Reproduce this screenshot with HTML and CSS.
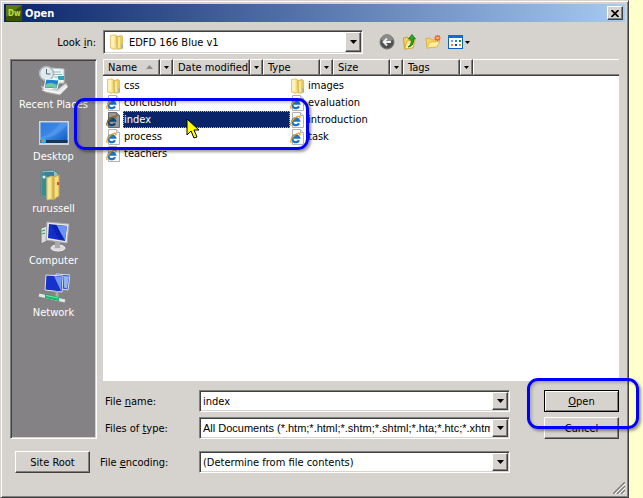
FILE: index.html
```html
<!DOCTYPE html>
<html lang="en">
<head>
  <meta charset="UTF-8">
  <meta name="viewport" content="width=device-width, initial-scale=1">
  <title>Open</title>
  <link rel="stylesheet" href="styles.css">
</head>
<body>

<!-- Shared icons -->
<svg class="sprite" aria-hidden="true">
  <symbol id="folder" viewBox="0 0 16 16">
    <path d="M1.500 1.500L6 .8l2 1.200v12.500l-2.500 1-4-1.500z" fill="#f3dc80" stroke="#d8b95c" stroke-width=".7"/>
    <path d="M7.500 2.500l5-1 1 1v12l-5 .8z" fill="#e9cb62" stroke="#cfae4a" stroke-width=".7"/>
    <path d="M2 2l3.500-.5v12.500L2 13z" fill="#fdf2b8"/>
    <path d="M9 3.500l2-.4V14l-2 .3z" fill="#f9e795"/>
    <path d="M12.500 10l1.500.5v3.500l-1.500.5z" fill="#86b4c4"/>
  </symbol>
  <symbol id="html" viewBox="0 0 16 16">
    <path d="M2.500.5h8l3 3v12h-11z" fill="#fff" stroke="#b2b2b2"/>
    <path d="M10.500.5v3h3" fill="#eee" stroke="#b5b5b5"/>
    <path d="M9 11.200A3.500 3.500 0 1 1 9.200 8.700H3.500" fill="none" stroke="#1a74c8" stroke-width="2.200"/>
    <path d="M1.500 13.800C-1 12 3.500 5 9.200 4.200c1.300 0 1 1.200.2 2" fill="none" stroke="#f0a51c" stroke-width="1.300"/>
  </symbol>
  <symbol id="arrow" viewBox="0 0 7 4">
    <path d="M0 0h7L3.500 4z" fill="#000"/>
  </symbol>
</svg>

<div class="dialog">

  <div class="titlebar">
    <svg class="logo" viewBox="0 0 16 16">
      <rect width="16" height="16" fill="#3d5200"/>
      <path d="M0 0h16L0 12z" fill="#5d7a08"/>
      <text x="2" y="11" class="logo-text">Dw</text>
    </svg>
    <h1>Open</h1>
    <button class="close" type="button" aria-label="Close">
      <svg viewBox="0 0 8 7" width="8" height="7"><path d="M.5 0l7 7M7.500 0l-7 7" stroke="#000" stroke-width="1.700"/></svg>
    </button>
  </div>

  <div class="look-row">
    <label for="lookin">Look <u>i</u>n:</label>
    <div class="combo look-combo">
      <svg class="icon"><use href="#folder"/></svg>
      <select id="lookin"><option>EDFD 166 Blue v1</option></select>
      <span class="drop"><svg><use href="#arrow"/></svg></span>
    </div>
    <div class="tools">
      <button type="button" aria-label="Back">
        <svg viewBox="0 0 16 16" width="16" height="16">
          <circle cx="8" cy="8" r="7" fill="#505050" stroke="#777"/>
          <path d="M2 6a6 6 0 0 1 12 0q-6 3-12 0z" fill="#8a8a8a"/>
          <path d="M12 8H5M8 4.500L4.500 8 8 11.500" fill="none" stroke="#eee" stroke-width="1.800"/>
        </svg>
      </button>
      <button type="button" aria-label="Up one level">
        <svg viewBox="0 0 16 16" width="16" height="16">
          <path d="M1.500 4l4-1 1 2 5-.5v9l-9 1.500z" fill="#f4d35e" stroke="#c69c2c"/>
          <path d="M2.500 15l2.500-8 8-1-2 8z" fill="#fceb9a" stroke="#d2ae42"/>
          <path d="M6 13q4-2 3-8H6.500L10 .5 13.500 5h-2q.8 7-5.500 8z" fill="#28ac28" stroke="#087508" stroke-width=".8"/>
        </svg>
      </button>
      <button type="button" aria-label="New folder">
        <svg viewBox="0 0 16 16" width="16" height="16">
          <path d="M1 4.500l4-.5 1.500 2 6-.5v7L2 14z" fill="#f7d765" stroke="#dcae45"/>
          <path d="M1.500 14L5 8l10-.5-3 5.500z" fill="#fdee9f" stroke="#e0b950"/>
          <path d="M12.500 1v6M9.500 4h6M10.300 1.800l4.400 4.400M14.700 1.800l-4.400 4.400" stroke="#f0582a" stroke-width="1.400"/>
          <circle cx="12.500" cy="4" r="1.300" fill="#ffcb70"/>
        </svg>
      </button>
      <button type="button" class="views" aria-label="Views">
        <svg viewBox="0 0 23 14" width="23" height="14">
          <rect x=".5" y=".5" width="14" height="13" fill="#fff" stroke="#0b62c4"/>
          <path d="M0 0h15v3H0z" fill="#0b6ed8"/>
          <path d="M3 5h2v2H3z" fill="#9a8fd8"/><path d="M7 5h2v2H7z" fill="#2a88d8"/><path d="M11 5h2v2h-2z" fill="#109010"/>
          <path d="M3 9h2v2H3z" fill="#f47850"/><path d="M7 9h2v2H7z" fill="#1040a8"/><path d="M11 9h2v2h-2z" fill="#d0a010"/>
          <path d="M17 6h5l-2.500 3z" fill="#000"/>
        </svg>
      </button>
    </div>
  </div>

  <div class="workspace">

    <nav class="places">
      <button type="button">
        <svg viewBox="0 0 32 32">
          <path d="M13 3l13 1v14H12z" fill="#f2f5f3" stroke="#b9c3c3"/>
          <path d="M16 7h7M16 9.500h8M16 12h4" stroke="#9bb4bc"/>
          <path d="M20 11h6v4h-6z" fill="#379bc6"/>
          <circle cx="8.500" cy="8.500" r="7" fill="#dfeaec" stroke="#a6b5b9" stroke-width="1.500"/>
          <path d="M8.500 4v5h4" fill="none" stroke="#526d78"/>
          <path d="M3 21l4 6 15 3 8-8-2-4-9 7z" fill="#e4e4df" stroke="#aaa"/>
          <path d="M8 14l13 1-2 9-13-1z" fill="#1b83cb" stroke="#f8ffff"/>
          <path d="M7 20q5-4 12 0l-.5 3-11-1z" fill="#73c8a0"/>
          <path d="M4 25l17 3 8-7" fill="none" stroke="#fff"/>
        </svg>
        Recent Places
      </button>
      <button type="button">
        <svg viewBox="0 0 32 32">
          <defs>
            <linearGradient id="desk" x2="1" y2="1"><stop stop-color="#2c7bdc"/><stop offset=".5" stop-color="#3f88e6"/><stop offset="1" stop-color="#0d55bd"/></linearGradient>
          </defs>
          <path d="M1 4h30v24H1z" fill="#cfd6dc"/>
          <path d="M2.500 5.500h27v20h-27z" fill="url(#desk)"/>
          <path d="M3 20Q14 18 22 6h7v2Q20 20 3 22z" fill="#67acf2" opacity=".4"/>
          <path d="M2.500 23h27v3h-27z" fill="#17345c"/>
          <circle cx="5.500" cy="24" r="2.500" fill="#2bb8e5"/><path d="M4 23h1.500v1.500H4z" fill="#f56a36"/>
        </svg>
        Desktop
      </button>
      <button type="button">
        <svg viewBox="0 0 32 32">
          <path d="M3 2l12-1 5 3v24l-9 3-8-5z" fill="#8fc5bd" stroke="#4f8584"/>
          <path d="M3.500 2.500l5 2v24l-5-3z" fill="#3d8b91"/>
          <path d="M6 3h10v4l-7 1z" fill="#3f7ea0"/>
          <circle cx="6" cy="8" r="1.500" fill="#dceff0"/>
          <path d="M9 9l5-2v23l-5 1z" fill="#f8e790" stroke="#d7b95a"/>
          <path d="M14 8l4-1v23l-4 1z" fill="#ddb954"/>
          <path d="M16 8l5-2v21l-5 3z" fill="#f5de7c" stroke="#c9a74b"/>
          <path d="M20 13v3" stroke="#df4141" stroke-width="2"/>
        </svg>
        rurussell
      </button>
      <button type="button">
        <svg viewBox="0 0 32 32">
          <path d="M3 7l6-2v15l-6 3z" fill="#dcdcdc" stroke="#777"/>
          <path d="M4 10l3-1M4 13l3-1" stroke="#23a34a"/>
          <ellipse cx="20" cy="27" rx="7" ry="3" fill="#d9d9d9" stroke="#f4f4f4"/>
          <path d="M17 20h5v7h-5z" fill="#aaa"/>
          <path d="M9 1l22 2-2 19-21-3z" fill="#e8e8e8" stroke="#a9a9a9"/>
          <path d="M11 3l18 2-2 15-17-3z" fill="#1230c9"/>
          <path d="M18 4l11 1-2 14z" fill="#6f94f0"/>
          <path d="M14 4l5 .5 6 14-5-1z" fill="#0d22b0"/>
        </svg>
        Computer
      </button>
      <button type="button">
        <svg viewBox="0 0 32 32">
          <path d="M18 1l14 1-2 15-13-2z" fill="#2b51da" stroke="#dedede"/>
          <path d="M26 3l5 .5-2 12-3-1z" fill="#91b5f2"/>
          <path d="M8 2l17 1-1 16-17-2z" fill="#1731cd" stroke="#e2e2e2"/>
          <path d="M16 3l8 1-1 14z" fill="#7298ef"/>
          <path d="M19 18v6" stroke="#aaa" stroke-width="3"/>
          <path d="M1 22l26 6" stroke="#dfe7e5" stroke-width="3"/>
          <path d="M7 21l14 3v4L7 25z" fill="#18b86c"/>
          <path d="M8 22.500l12 2.500" stroke="#68efa7"/>
        </svg>
        Network
      </button>
    </nav>

    <div class="content">
      <div class="files">
        <div class="columns">
          <button type="button" class="col">Name <svg class="sort" viewBox="0 0 7 4"><path d="M3.500 0L7 4H0z" fill="#8a8a8a"/></svg></button>
          <button type="button" class="filter" aria-label="Filter by name"><svg><use href="#arrow"/></svg></button>
          <button type="button" class="col wide">Date modified</button>
          <button type="button" class="filter" aria-label="Filter by date"><svg><use href="#arrow"/></svg></button>
          <button type="button" class="col">Type</button>
          <button type="button" class="filter" aria-label="Filter by type"><svg><use href="#arrow"/></svg></button>
          <button type="button" class="col">Size</button>
          <button type="button" class="filter" aria-label="Filter by size"><svg><use href="#arrow"/></svg></button>
          <button type="button" class="col">Tags</button>
          <button type="button" class="filter" aria-label="Filter by tags"><svg><use href="#arrow"/></svg></button>
          <span class="rest"></span>
        </div>
        <ul class="list">
          <li><button type="button"><svg class="icon"><use href="#folder"/></svg><span>css</span></button></li>
          <li><button type="button"><svg class="icon"><use href="#folder"/></svg><span>images</span></button></li>
          <li><button type="button"><svg class="icon"><use href="#html"/></svg><span>conclusion</span></button></li>
          <li><button type="button"><svg class="icon"><use href="#html"/></svg><span>evaluation</span></button></li>
          <li class="selected"><button type="button"><svg class="icon"><use href="#html"/></svg><span>index</span></button></li>
          <li><button type="button"><svg class="icon"><use href="#html"/></svg><span>introduction</span></button></li>
          <li><button type="button"><svg class="icon"><use href="#html"/></svg><span>process</span></button></li>
          <li><button type="button"><svg class="icon"><use href="#html"/></svg><span>task</span></button></li>
          <li><button type="button"><svg class="icon"><use href="#html"/></svg><span>teachers</span></button></li>
        </ul>
        <div class="ring ring-file"></div>
        <svg class="cursor" viewBox="0 0 13 21"><path d="M1 1v16l4-4 3 7 3-1-3-7h5z" fill="#ff0" stroke="#000"/></svg>
      </div>

      <div class="fields">
        <label for="filename">File <u>n</u>ame:</label>
        <div class="combo">
          <input id="filename" type="text" value="index">
          <span class="drop"><svg><use href="#arrow"/></svg></span>
        </div>
        <div class="open-wrap">
          <button type="button" class="btn default"><u>O</u>pen</button>
          <div class="ring ring-open"></div>
        </div>

        <label for="filetype">Files of <u>t</u>ype:</label>
        <div class="combo">
          <select id="filetype" class="sans"><option>All Documents (*.htm;*.html;*.shtm;*.shtml;*.hta;*.htc;*.xhtml;*.stm;*.ssi;*.js)</option></select>
          <span class="drop"><svg><use href="#arrow"/></svg></span>
        </div>
        <button type="button" class="btn">Cancel</button>
      </div>
    </div>
  </div>

  <div class="bottom">
    <button type="button" class="btn">Site Root</button>
    <label for="encoding">File <u>e</u>ncoding:</label>
    <div class="combo">
      <select id="encoding"><option>(Determine from file contents)</option></select>
      <span class="drop"><svg><use href="#arrow"/></svg></span>
    </div>
  </div>
  <svg class="grip" viewBox="0 0 12 12"><path d="M0 12L12 0M4 12l8-8M8 12l4-4" stroke="#808080" stroke-width="1.500"/><path d="M2 12L12 2M6 12l6-6M10 12l2-2" stroke="#fff"/></svg>

</div>

</body>
</html>
```
FILE: styles.css
```css
* {
  box-sizing: border-box;
}
body {
  margin: 0;
  padding-right: 14px;
  background: #ffffcc;
  color: #000;
  font-family: "DejaVu Sans Condensed", "DejaVu Sans", sans-serif;
  font-size: 11px;
}
button, input, select {
  font: inherit;
  color: inherit;
  margin: 0;
}
button {
  padding: 0;
  border: none;
  background: none;
}
svg {
  display: block;
  flex: none;
}
.sprite {
  position: absolute;
  width: 0;
  height: 0;
}
.icon {
  width: 16px;
  height: 16px;
}
.dialog {
  background: #d6d3ce;
  border: 1px solid #d6d3ce;
  border-right-color: #404040;
  border-bottom-color: #404040;
  box-shadow: inset 1px 1px #fff, inset -1px -1px #808080;
  padding: 3px;
}

/* title bar */
.titlebar {
  display: flex;
  align-items: center;
  gap: 3px;
  height: 18px;
  padding: 0 2px;
  background: linear-gradient(to right, #0a246a, #a6caf0);
}
.titlebar h1 {
  flex: 1;
  margin: 0;
  color: #fff;
  font-size: 11px;
}
.logo {
  width: 16px;
  height: 16px;
}
.logo-text {
  font-size: 8px;
  font-weight: bold;
  fill: #c3e03a;
}
.close {
  display: grid;
  place-items: center;
  width: 16px;
  height: 14px;
  background: #d6d3ce;
  border: 1px solid;
  border-color: #fff #404040 #404040 #fff;
  box-shadow: inset -1px -1px #808080;
}

/* look in row */
.look-row {
  display: grid;
  grid-template-columns: 92px 260px 1fr;
  align-items: center;
  column-gap: 7px;
  padding: 8px 0 5px;
}
.look-row label {
  text-align: right;
}
.tools {
  display: flex;
  align-items: center;
  gap: 7px;
  padding-left: 9px;
}

/* combo boxes */
.combo {
  display: flex;
  height: 22px;
  min-width: 0;
  background: #fff;
  border: 1px solid;
  border-color: #808080 #fff #fff #808080;
  box-shadow: inset 1px 1px #404040, inset -1px -1px #d6d3ce;
  padding: 1px;
}
.combo select,
.combo input {
  flex: 1;
  min-width: 0;
  appearance: none;
  padding: 0 2px;
  border: none;
  border-radius: 0;
  outline: none;
  background: transparent;
}
.look-combo {
  height: 24px;
  align-items: center;
  padding-left: 5px;
}
.look-combo select {
  padding-left: 4px;
}
.drop {
  display: grid;
  place-items: center;
  align-self: stretch;
  width: 16px;
  background: #d6d3ce;
  border: 1px solid;
  border-color: #fff #404040 #404040 #fff;
  box-shadow: inset -1px -1px #808080;
  pointer-events: none;
}
.drop svg {
  width: 7px;
  height: 4px;
}
.sans {
  font-family: "Liberation Sans", Arial, sans-serif;
}

/* places bar */
.workspace {
  display: grid;
  grid-template-columns: 87px 1fr;
  column-gap: 6px;
  padding: 0 6px;
}
.places {
  display: flex;
  flex-direction: column;
  gap: 6px;
  padding: 5px 1px;
  background: #848284;
  border: 1px solid;
  border-color: #808080 #fff #fff #808080;
  box-shadow: inset 1px 1px #404040, inset -1px -1px #d6d3ce;
}
.places button {
  display: flex;
  flex-direction: column;
  align-items: center;
  height: 46px;
  color: #fff;
  white-space: nowrap;
  line-height: 15px;
}
.places svg {
  width: 32px;
  height: 32px;
}

/* file list */
.files {
  position: relative;
  background: #fff;
}
.columns {
  display: flex;
  height: 17px;
  background: #d6d3ce;
  border-bottom: 1px solid #404040;
}
.col, .filter, .rest {
  border-top: 1px solid #fff;
  border-left: 1px solid #fff;
  border-bottom: 1px solid #808080;
}
.col, .filter {
  border-right: 1px solid #404040;
  box-shadow: inset -1px 0 #808080;
}
.col {
  display: flex;
  align-items: center;
  gap: 9px;
  width: 57px;
  padding-left: 4px;
  white-space: nowrap;
}
.col.wide {
  width: 77px;
}
.sort {
  width: 7px;
  height: 4px;
}
.filter {
  display: grid;
  place-items: center;
  width: 13px;
}
.filter svg {
  width: 5px;
  height: 3px;
}
.rest {
  flex: 1;
}
.list {
  display: grid;
  grid-template-columns: 184px 184px;
  grid-auto-rows: 17px;
  align-content: start;
  min-height: 305px;
  margin: 0;
  padding: 1px 3px 0;
  list-style: none;
}
.list button {
  display: flex;
  align-items: center;
  gap: 1px;
  width: 100%;
  height: 17px;
}
.list span {
  padding: 0 1px;
  line-height: 17px;
}
.selected span {
  flex: 1;
  text-align: left;
  background: #0a246a;
  color: #fff;
  outline: 1px dotted #c9a86a;
  outline-offset: -1px;
}
.selected .icon {
  filter: brightness(0.6);
}
.ring {
  position: absolute;
  border: 3px solid #0000ff;
  border-radius: 11px;
  box-shadow: 2px 2px 3px rgba(0,0,0,0.4), inset 2px 2px 3px rgba(0,0,0,0.2);
  pointer-events: none;
}
.ring-file {
  left: -29px;
  top: 39px;
  width: 235px;
  height: 52px;
}
.cursor {
  position: absolute;
  left: 83px;
  top: 59px;
  width: 13px;
  height: 21px;
}

/* fields */
.fields {
  display: grid;
  grid-template-columns: 94px 1fr 75px;
  align-items: center;
  row-gap: 5px;
  padding: 9px 0 0 2px;
}
.fields .combo {
  margin-right: 34px;
}
.btn {
  width: 75px;
  height: 22px;
  background: #d6d3ce;
  border: 1px solid;
  border-color: #fff #404040 #404040 #fff;
  box-shadow: inset -1px -1px #808080;
}
.btn.default {
  border-color: #000;
  box-shadow: inset 1px 1px #fff, inset -1px -1px #808080;
}
.open-wrap {
  position: relative;
}
.ring-open {
  top: -12px;
  right: -20px;
  bottom: -17px;
  left: -17px;
}
.bottom {
  display: grid;
  grid-template-columns: 85px 99px 1fr;
  align-items: center;
  padding: 12px 115px 0 11px;
}
.grip {
  width: 12px;
  height: 12px;
  margin: 9px 0 0 auto;
}
```
